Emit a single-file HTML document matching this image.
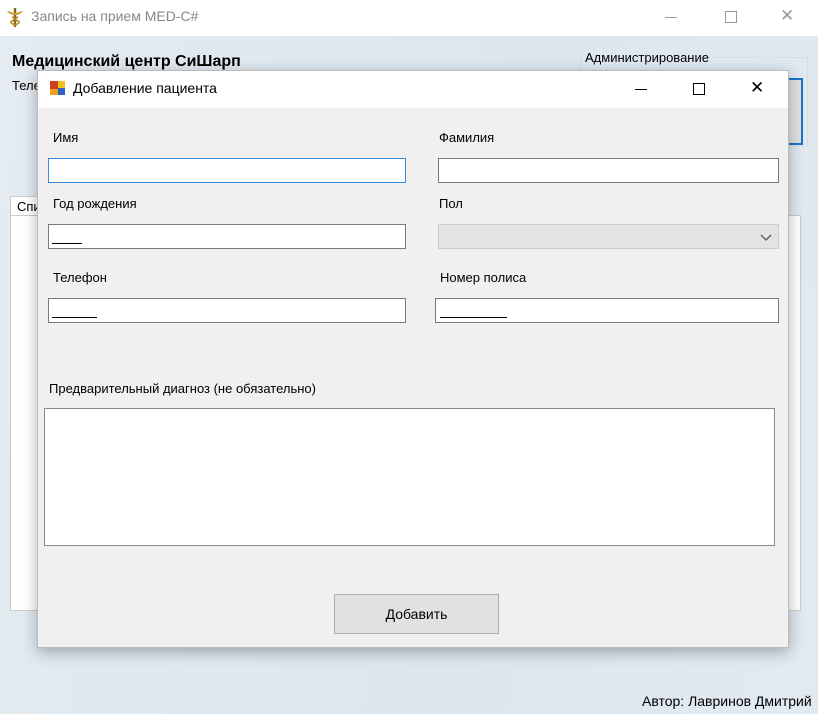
<!DOCTYPE html>
<html><head><meta charset="utf-8"><style>
*{margin:0;padding:0;box-sizing:border-box}
body{width:818px;height:714px;overflow:hidden;position:relative;font-family:"Liberation Sans","Noto Sans CJK SC",sans-serif;font-size:13px;color:#000;background:linear-gradient(100deg,#e4ebf1,#dbe6ef 60%,#e2eaf1)}
.abs{position:absolute}
.tb{left:0;top:0;width:818px;height:36px;background:#fff}
.inp{position:absolute;background:#fff;border:1px solid #7a7a7a;height:25px}
.lbl{position:absolute;font-size:13px;color:#000}
.ul{position:absolute;border-bottom:1px solid #000;height:1px}
</style></head><body>
<div class="abs tb"></div>
<svg class="abs" style="left:5px;top:6px" width="20" height="22" viewBox="0 0 20 22"><path d="M10 2v19" stroke="#8a6a20" stroke-width="2.5"/><path d="M2 5c3 0 5 2 8 2s5-2 8-2c-2 3-5 4-8 4S4 8 2 5z" fill="#c9a030"/><path d="M7 11c3 1 3 3 0 4s0 3 3 4M13 11c-3 1-3 3 0 4s0 3-3 4" stroke="#b58a20" fill="none" stroke-width="1.5"/></svg>
<div class="abs" style="left:31px;top:8px;font-size:14px;color:#888">Запись на прием MED-C#</div>
<div class="abs" style="left:665px;top:17px;width:12px;border-top:1px solid #999"></div>
<div class="abs" style="left:725px;top:11px;width:12px;height:12px;border:1px solid #999"></div>
<div class="abs" style="left:780px;top:6px;font-size:17px;color:#999">✕</div>
<div class="abs" style="left:12px;top:53px;font-size:16px;font-weight:bold">Медицинский центр СиШарп</div>
<div class="abs" style="left:12px;top:78px;font-size:13px">Теле</div>
<div class="abs" style="left:580px;top:57px;width:228px;height:90px;border:1px solid #d8dde2"></div>
<div class="abs" style="left:583px;top:50px;font-size:13px;background:#dfe8f0;padding:0 2px">Администрирование</div>
<div class="abs" style="left:760px;top:78px;width:43px;height:67px;border:2px solid #1a73c8;background:#e1e1e1"></div>
<div class="abs" style="left:10px;top:196px;width:40px;height:20px;background:#fff;border:1px solid #ccc;padding:2px 6px">Спи</div>
<div class="abs" style="left:10px;top:215px;width:791px;height:396px;background:#fff;border:1px solid #ccc"></div>
<div class="abs" style="left:642px;top:693px;font-size:14px">Автор: Лавринов Дмитрий</div>
<div class="abs" style="left:37px;top:70px;width:752px;height:578px;background:#f0f0f0;box-shadow:0 4px 14px rgba(0,0,0,.3);border:1px solid #bbb"></div>
<div class="abs" style="left:38px;top:71px;width:750px;height:37px;background:#fff"></div>
<svg class="abs" style="left:50px;top:80px" width="16" height="16"><rect x="0" y="1" width="8" height="8" fill="#d04020"/><rect x="8" y="1" width="7" height="7" fill="#f0c020"/><rect x="0" y="9" width="8" height="6" fill="#e8a020"/><rect x="8" y="8" width="7" height="7" fill="#3060c0"/></svg>
<div class="abs" style="left:73px;top:80px;font-size:14px">Добавление пациента</div>
<div class="abs" style="left:635px;top:89px;width:12px;border-top:1px solid #000"></div>
<div class="abs" style="left:693px;top:83px;width:12px;height:12px;border:1px solid #000"></div>
<div class="abs" style="left:750px;top:78px;font-size:17px">✕</div>
<div class="lbl" style="left:53px;top:130px">Имя</div>
<div class="lbl" style="left:439px;top:130px">Фамилия</div>
<div class="inp" style="left:48px;top:158px;width:358px;border-color:#3c8ad6"></div>
<div class="inp" style="left:438px;top:158px;width:341px"></div>
<div class="lbl" style="left:53px;top:196px">Год рождения</div>
<div class="lbl" style="left:439px;top:196px">Пол</div>
<div class="inp" style="left:48px;top:224px;width:358px"></div>
<div class="ul" style="left:52px;top:243px;width:30px"></div>
<div class="inp" style="left:438px;top:224px;width:341px;background:#e3e3e3;border-color:#ccc"></div>
<svg class="abs" style="left:760px;top:232px" width="12" height="10"><path d="M1 3l5 5 5-5" stroke="#555" fill="none" stroke-width="1.3"/></svg>
<div class="lbl" style="left:53px;top:270px">Телефон</div>
<div class="lbl" style="left:440px;top:270px">Номер полиса</div>
<div class="inp" style="left:48px;top:298px;width:358px"></div>
<div class="ul" style="left:52px;top:317px;width:45px"></div>
<div class="inp" style="left:435px;top:298px;width:344px"></div>
<div class="ul" style="left:440px;top:317px;width:67px"></div>
<div class="lbl" style="left:49px;top:381px">Предварительный диагноз (не обязательно)</div>
<div class="abs" style="left:44px;top:408px;width:731px;height:138px;background:#fff;border:1px solid #888"></div>
<div class="abs" style="left:334px;top:594px;width:165px;height:40px;background:#e1e1e1;border:1px solid #adadad;text-align:center;line-height:38px;font-size:14px">Добавить</div>
</body></html>
